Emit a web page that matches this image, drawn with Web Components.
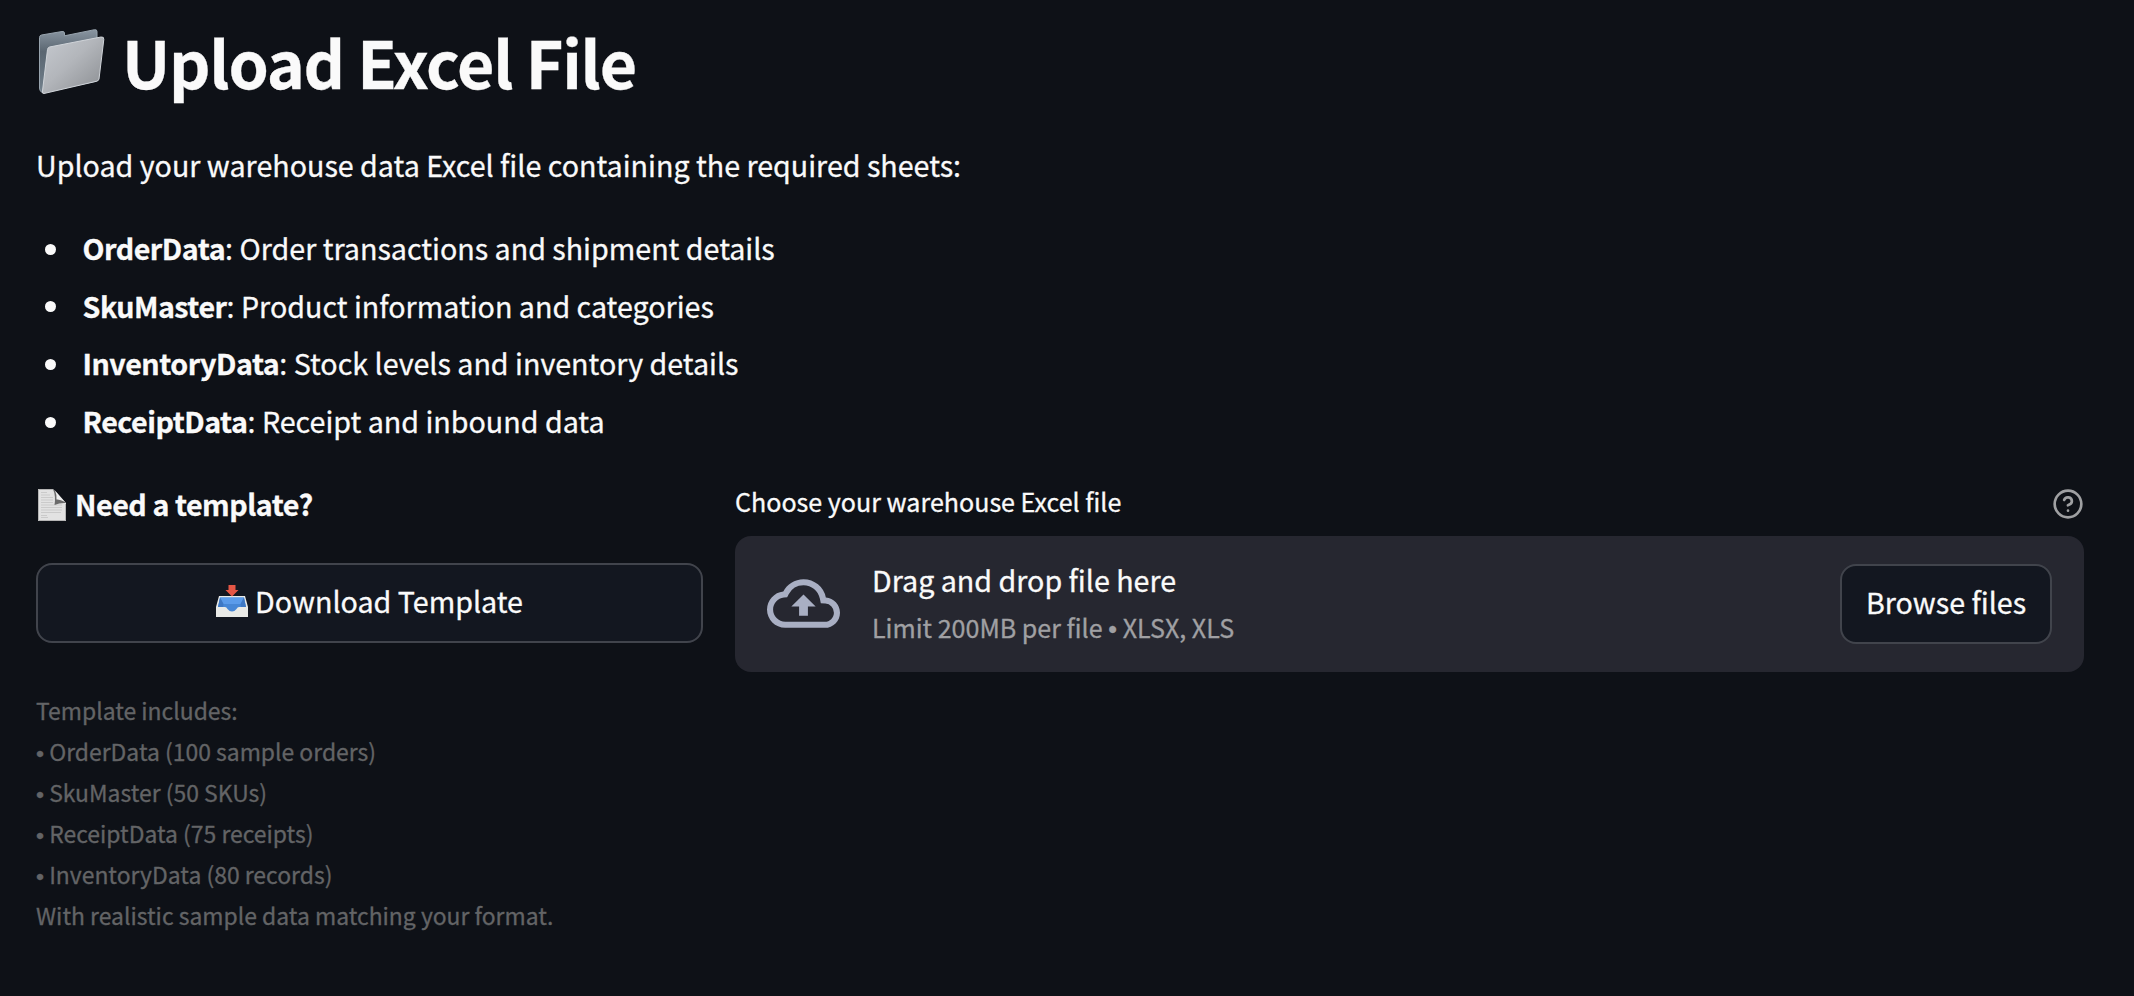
<!DOCTYPE html>
<html lang="en">
<head>
<meta charset="utf-8">
<title>Upload Excel File</title>
<style>
html,body{margin:0;height:100%;background:#0e1117}
body{font-family:"Noto Sans CJK SC","Source Sans Pro",sans-serif;color:#fafafa;font-size:28.65px;overflow:hidden;-webkit-text-stroke:.3px}
</style>
</head>
<body>
<upload-page></upload-page>
<script>
const define=(name,html)=>customElements.define(name,class extends HTMLElement{
  constructor(){
    super();
    const t=document.createElement('template');
    t.innerHTML=html;
    this.attachShadow({mode:'open'}).append(t.content.cloneNode(true));
  }
});

define('icon-folder',`<style>:host{display:block;width:68px;height:68px}svg{display:block;overflow:visible}</style>
<svg width="68" height="68" viewBox="0 0 68 68">
<defs><linearGradient id="b" x1="0" y1="0" x2="0" y2="1"><stop offset="0" stop-color="#8a96a2"/><stop offset=".35" stop-color="#5a6671"/><stop offset="1" stop-color="#72808c"/></linearGradient>
<linearGradient id="f" x1="0" y1="0" x2="1" y2="1"><stop offset="0" stop-color="#c6cad0"/><stop offset=".45" stop-color="#b3b6bb"/><stop offset="1" stop-color="#898c90"/></linearGradient></defs>
<path d="M3.500 8.500Q3.500 6.500 5.500 6L26 2.500Q28.300 2 28.500 4V6.800L58.500 .7Q61 .3 61 2.500V52L8 63.500Q4 64 3.500 59Z" fill="url(#b)" stroke="#98a4ae" stroke-width="1"/>
<path d="M11.500 20.500Q11.800 18.500 13.500 18L65 8Q68.200 7.500 67.800 10.500L63 50Q62.700 51.800 60.500 52.300L8 64.500Q6 65 6.500 62Z" fill="url(#f)" stroke="#d0d4d9" stroke-width="1"/>
</svg>`);

define('icon-page',`<style>:host{display:block;width:28px;height:32px}svg{display:block}</style>
<svg width="28" height="32" viewBox="0 0 28 32">
<path d="M0 0H15L28 14V32H0Z" fill="#e2e2e2"/>
<path d="M3 3.500H9M3 6H12M3 8.500H15M3 11H15M3 13.500H15M3 16H24M3 18.500H24M3 21H24M3 23.500H23M3 26.500H9M3 28.500H10" stroke="#cacaca" stroke-width="1"/>
<path d="M15 0Q18 7 16.500 16Q22 13.500 28 14Z" fill="#6a6a6a"/>
<path d="M17 1.500L27 13Q22 10 18.500 10.500Q19 6 17 1.500Z" fill="#eee"/>
<path d="M.5 .5H15M.5 .5V31.500H27.500V15" fill="none" stroke="#b5b5b5"/>
</svg>`);

define('icon-inbox',`<style>:host{display:block;width:32px;height:32px;margin-bottom:1px}svg{display:block}</style>
<svg width="32" height="32" viewBox="0 0 32 32">
<path d="M3 11H29L32 22V32H0V22Z" fill="#e9eae7"/>
<path d="M4 12.500H28L30 22H23Q21.500 22 20.500 24Q18.500 26.500 16 26.500T11.500 24Q10.500 22 9 22H2Z" fill="#4787d6"/>
<path d="M4 12.500L7.500 19H24.500L28 12.500Z" fill="#5b9bea"/>
<path d="M4 12.500L2 22H7L7.500 19ZM28 12.500L30 22H25L24.500 19Z" fill="#3e78c4"/>
<path d="M12.500 0H19.500V5H22.500L16 11.500L9.500 5H12.500Z" fill="#e55645"/>
</svg>`);

define('icon-cloud',`<style>:host{display:block;flex:none}svg{display:block}</style>
<svg width="73" height="73" viewBox="0 0 24 24" fill="#a9afc3"><path d="M19.350 10.040A7.490 7.490 0 0012 4C9.110 4 6.600 5.640 5.350 8.040A5.994 5.994 0 000 14c0 3.310 2.690 6 6 6h13c2.760 0 5-2.240 5-5 0-2.640-2.050-4.780-4.650-4.960zM19 18H6c-2.210 0-4-1.790-4-4 0-2.050 1.530-3.760 3.560-3.970l1.070-.11.5-.95A5.469 5.469 0 0112 6c2.620 0 4.880 1.860 5.390 4.430l.3 1.500 1.530.11A2.980 2.980 0 0122 15c0 1.650-1.350 3-3 3zM8 13h2.550v3h2.900v-3H16l-4-4-4 4z"/></svg>`);

define('icon-help',`<style>:host{display:block}svg{display:block}</style>
<svg width="32" height="32" viewBox="0 0 24 24" fill="none" stroke="#9fa0a2" stroke-width="2" stroke-linecap="round" stroke-linejoin="round"><circle cx="12" cy="12" r="10"/><path d="M9.090 9a3 3 0 0 1 5.830 1c0 2-3 3-3 3"/><path d="M12 17h.01"/></svg>`);

define('text-bullet',`<style>:host{font-family:"Liberation Sans",sans-serif;line-height:0}</style>•`);

define('page-title',`<style>:host{display:flex;height:92px;align-items:flex-start}
h1{margin:-4px 0 0 18px;font-size:64.500px;line-height:92px;font-weight:700;letter-spacing:-1.220px;white-space:nowrap}icon-folder{margin-top:10px}</style>
<icon-folder></icon-folder><h1><slot></slot></h1>`);

define('sheet-item',`<style>:host{display:flex;align-items:center;height:57.600px;line-height:57.600px;white-space:nowrap}
i{width:11px;height:11px;border-radius:50%;background:#fafafa;margin:0 26.500px 0 9px}b{font-weight:700;letter-spacing:-.48px}span{padding-bottom:3px}</style>
<i></i><span><b><slot name="name"></slot></b><slot></slot></span>`);

define('outline-button',`<style>:host{display:block}
button{box-sizing:border-box;display:flex;align-items:center;justify-content:center;gap:7px;width:100%;height:80px;border:2px solid #41444c;border-radius:16px;background:#131720;color:inherit;font:inherit;padding:0 23px 3px;line-height:46px;white-space:nowrap;-webkit-text-stroke:inherit}</style>
<button><slot name="icon"></slot><span><slot></slot></span></button>`);

define('template-caption',`<style>:host{display:block;font-size:22.920px;line-height:40.960px;color:#636466;white-space:nowrap}</style><slot></slot>`);

define('file-uploader',`<style>:host{display:block}
.label{display:flex;justify-content:space-between;align-items:center;font-size:25.070px;line-height:40px;height:46px;margin-bottom:9px}
.l{padding-bottom:6px}
.zone{box-sizing:border-box;display:flex;align-items:center;height:136px;padding:0 32px;border-radius:16px;background:#262730}
.text{flex:1;margin-left:32px;white-space:nowrap}
.main{line-height:46px}.sub{font-size:25.070px;line-height:46px;margin-top:1px;color:#a0a0a3}
outline-button{width:212px}</style>
<div class="label"><span class="l"><slot name="label"></slot></span><icon-help></icon-help></div>
<div class="zone"><icon-cloud></icon-cloud><div class="text"><div class="main">Drag and drop file here</div><div class="sub">Limit 200MB per file <text-bullet></text-bullet> XLSX, XLS</div></div>
<outline-button>Browse files</outline-button></div>`);

define('upload-page',`<style>:host{box-sizing:border-box;display:block;height:996px;padding:19px 50px 0 36px;background:#0e1117}
p{margin:29.500px 0 0;line-height:48px;height:48px;white-space:nowrap}
.list{margin-top:32px}
.cols{display:grid;grid-template-columns:667px 1349px;column-gap:32px;margin-top:30.100px}
.need{display:flex;align-items:center;gap:9px;height:48px;line-height:48px;font-weight:700;letter-spacing:-.46px;padding-left:2px}
.need span{padding-bottom:1px}
outline-button{margin-top:34px}
template-caption{margin-top:47px}</style>
<page-title>Upload Excel File</page-title>
<p>Upload your warehouse data Excel file containing the required sheets:</p>
<div class="list">
<sheet-item><span slot="name">OrderData</span>: Order transactions and shipment details</sheet-item>
<sheet-item><span slot="name">SkuMaster</span>: Product information and categories</sheet-item>
<sheet-item><span slot="name">InventoryData</span>: Stock levels and inventory details</sheet-item>
<sheet-item><span slot="name">ReceiptData</span>: Receipt and inbound data</sheet-item>
</div>
<div class="cols">
<div><div class="need"><icon-page></icon-page><span>Need a template?</span></div>
<outline-button><icon-inbox slot="icon"></icon-inbox>Download Template</outline-button>
<template-caption>Template includes:<br><text-bullet></text-bullet> OrderData (100 sample orders)<br><text-bullet></text-bullet> SkuMaster (50 SKUs)<br><text-bullet></text-bullet> ReceiptData (75 receipts)<br><text-bullet></text-bullet> InventoryData (80 records)<br>With realistic sample data matching your format.</template-caption></div>
<file-uploader><span slot="label">Choose your warehouse Excel file</span></file-uploader>
</div>`);
</script>
</body>
</html>
